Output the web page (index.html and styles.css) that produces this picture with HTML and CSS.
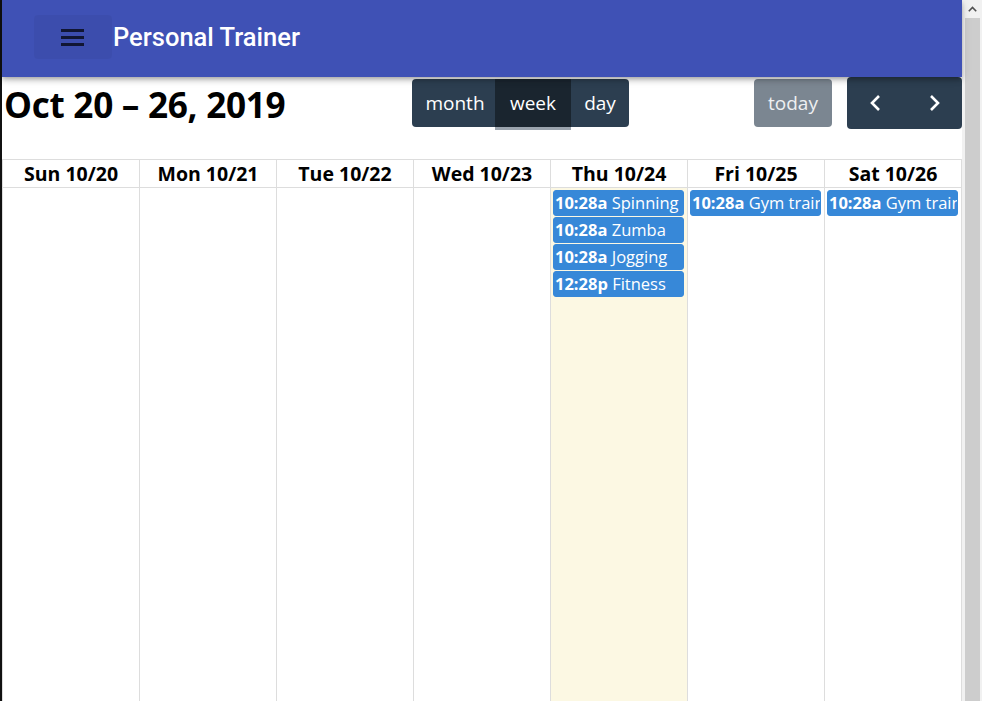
FILE: index.html
```html
<!DOCTYPE html>
<html>
<head>
<meta charset="utf-8">
<link rel="stylesheet" href="styles.css">
</head>
<body>
<div class="page">
  <header class="appbar">
    <button class="menu-btn" aria-label="menu">
      <svg width="24" height="18" viewBox="0 0 24 18"><rect x="0" y="1" width="23" height="3" fill="#111633"/><rect x="0" y="8" width="23" height="3" fill="#111633"/><rect x="0" y="15" width="23" height="3" fill="#111633"/></svg>
    </button>
    <h1 class="app-title">Personal Trainer</h1>
  </header>

  <div class="toolbar">
    <h2 class="range-title">Oct 20 – 26, 2019</h2>
    <div class="btn-group views">
      <button class="btn v-month">month</button>
      <button class="btn v-week active">week</button>
      <button class="btn v-day">day</button>
    </div>
    <div class="spacer"></div>
    <button class="btn today">today</button>
    <div class="btn-group nav">
      <button class="btn nav-btn" aria-label="prev">
        <svg width="14" height="18" viewBox="0 0 14 18"><polyline points="10,2 3,9 10,16" fill="none" stroke="#fff" stroke-width="2.6"/></svg>
      </button>
      <button class="btn nav-btn" aria-label="next">
        <svg width="14" height="18" viewBox="0 0 14 18"><polyline points="4,2 11,9 4,16" fill="none" stroke="#fff" stroke-width="2.6"/></svg>
      </button>
    </div>
  </div>

  <div class="calendar">
    <div class="head-row">
      <div class="head-cell">Sun 10/20</div>
      <div class="head-cell">Mon 10/21</div>
      <div class="head-cell">Tue 10/22</div>
      <div class="head-cell">Wed 10/23</div>
      <div class="head-cell">Thu 10/24</div>
      <div class="head-cell">Fri 10/25</div>
      <div class="head-cell">Sat 10/26</div>
    </div>
    <div class="body-row">
      <div class="day"></div>
      <div class="day"></div>
      <div class="day"></div>
      <div class="day"></div>
      <div class="day today-col">
        <div class="event"><b>10:28a</b> Spinning</div>
        <div class="event"><b>10:28a</b> Zumba</div>
        <div class="event"><b>10:28a</b> Jogging</div>
        <div class="event"><b>12:28p</b> Fitness</div>
      </div>
      <div class="day">
        <div class="event"><b>10:28a</b> Gym training</div>
      </div>
      <div class="day">
        <div class="event"><b>10:28a</b> Gym training</div>
      </div>
    </div>
  </div>
</div>
<div class="scrollbar">
  <div class="sb-arrow">
    <svg width="9" height="6" viewBox="0 0 9 6"><polyline points="0.8,5.2 4.5,1.5 8.2,5.2" fill="none" stroke="#505050" stroke-width="1.6"/></svg>
  </div>
  <div class="sb-thumb"></div>
</div>
</body>
</html>
```

FILE: styles.css
```css
* { box-sizing: border-box; }

html, body {
  margin: 0;
  padding: 0;
  height: 701px;
  overflow: hidden;
}

body {
  display: flex;
  font-family: "Open Sans", "Noto Sans", sans-serif;
  background: #fff;
  color: #000;
}

.page {
  width: 962px;
  height: 701px;
  border-left: 2px solid #111;
  display: flex;
  flex-direction: column;
}

.appbar {
  height: 77px;
  flex: none;
  background: #3f51b5;
  display: flex;
  align-items: center;
  padding-left: 32px;
  box-shadow: 0 2px 4px -1px rgba(0,0,0,.2), 0 4px 5px 0 rgba(0,0,0,.14), 0 1px 10px 0 rgba(0,0,0,.12);
  position: relative;
  z-index: 2;
}

.menu-btn {
  width: 78px;
  height: 44px;
  margin-top: -3px;
  border: none;
  border-radius: 4px;
  background: rgba(0,0,0,0.04);
  display: flex;
  align-items: center;
  justify-content: center;
  padding: 0;
}

.app-title {
  margin: -3px 0 0 1px;
  font-family: Roboto, sans-serif;
  font-weight: 500;
  font-size: 25.5px;
  color: #fff;
}

.toolbar {
  height: 54px;
  flex: none;
  display: flex;
  align-items: flex-start;
  padding-left: 2px;
}

.range-title {
  margin: 7px 0 0 0;
  width: 408px;
  font-size: 35.2px;
  font-weight: 700;
  line-height: 40px;
  letter-spacing: -0.3px;
  white-space: nowrap;
}

.btn-group {
  display: flex;
  margin-top: 2px;
}

.btn {
  border: none;
  font-family: "Open Sans", "Noto Sans", sans-serif;
  font-size: 19px;
  color: #fff;
  background: #2c3e50;
  height: 48px;
  padding: 0;
  line-height: 49px;
  text-align: center;
}

.btn-group .btn:first-child { border-radius: 4px 0 0 4px; }
.btn-group .btn:last-child { border-radius: 0 4px 4px 0; }

.btn.active {
  background: #1a252f;
  box-shadow: 0 3px 0 0 #9aa3ad;
}

.v-month { width: 83px; padding-left: 3px; }
.v-week { width: 76px; }
.v-day { width: 58px; }

.spacer { flex: 1; }

.today {
  background: #7b8691;
  color: #eef0f2;
  border-radius: 4px;
  width: 78px;
  margin-top: 2px;
  margin-right: 15px;
}

.btn-group.nav {
  margin-top: 0;
}

.nav-btn {
  width: 57px;
  height: 52px;
  display: flex;
  align-items: center;
  justify-content: center;
}
.nav-btn:first-child { width: 58px; }

.calendar {
  margin-top: 28px;
  flex: 1;
  display: flex;
  flex-direction: column;
  border-top: 1px solid #ddd;
  border-left: 1px solid #ddd;
}

.head-row {
  display: grid;
  grid-template-columns: repeat(7, 1fr);
  height: 28px;
  border-bottom: 1px solid #ddd;
}

.head-cell {
  text-align: center;
  font-weight: 700;
  font-size: 19.5px;
  line-height: 28px;
  border-right: 1px solid #ddd;
  white-space: nowrap;
  overflow: hidden;
}

.body-row {
  flex: 1;
  display: grid;
  grid-template-columns: repeat(7, 1fr);
}

.day {
  border-right: 1px solid #ddd;
  padding-top: 2px;
  min-width: 0;
}

.today-col { background: #fcf8e3; }

.event {
  margin: 0 3px 1px 2px;
  height: 26px;
  background: #3788d8;
  border: 1px solid #3788d8;
  border-radius: 3px;
  color: #fff;
  font-size: 16.5px;
  line-height: 23px;
  padding-left: 1px;
  white-space: nowrap;
  overflow: hidden;
}

.event b { font-weight: 700; }

.scrollbar {
  width: 20px;
  height: 701px;
  background: #f1f1f1;
  display: flex;
  flex-direction: column;
  align-items: center;
}

.sb-arrow {
  height: 17px;
  width: 100%;
  display: flex;
  align-items: center;
  justify-content: center;
}

.sb-thumb {
  flex: 1;
  width: 15px;
  margin-top: 1px;
  background: #cdcdcd;
}
```
